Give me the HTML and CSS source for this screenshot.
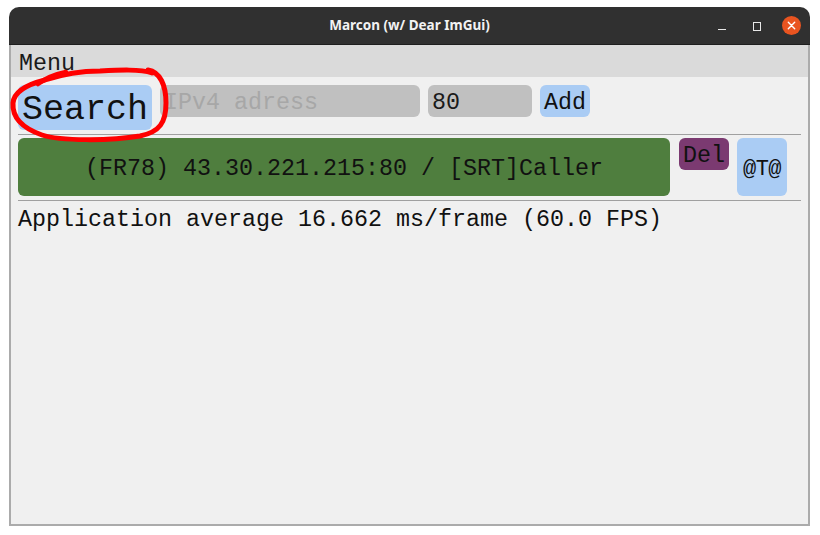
FILE: index.html
```html
<!DOCTYPE html>
<html>
<head>
<meta charset="utf-8">
<title>Marcon (w/ Dear ImGui)</title>
<link rel="stylesheet" href="styles.css">
</head>
<body>
<div class="window">
  <div class="titlebar">
    <span class="spacer"></span>
    <span class="title">Marcon (w/ Dear ImGui)</span>
    <div class="controls">
      <span class="ctl-min"></span>
      <span class="ctl-max"></span>
      <span class="ctl-close">
        <svg width="19" height="19" viewBox="0 0 19 19"><circle cx="9.5" cy="9.5" r="9.5" fill="#e95420"/><path d="M6.3 6.3 L12.7 12.7 M12.7 6.3 L6.3 12.7" stroke="#fff" stroke-width="1.4" stroke-linecap="round"/></svg>
      </span>
    </div>
  </div>
  <div class="frame">
    <div class="menubar">Menu</div>
    <div class="content">
      <div class="row">
        <div class="btn btn-big">Search</div>
        <div class="input input-ip">IPv4 adress</div>
        <div class="input input-port">80</div>
        <div class="btn">Add</div>
      </div>
      <div class="sep"></div>
      <div class="row row-gap-peer">
        <div class="peer">(FR78) 43.30.221.215:80 / [SRT]Caller</div>
        <div class="btn btn-del">Del</div>
        <div class="btn btn-tall">@T@</div>
      </div>
      <div class="sep sep-2"></div>
      <div class="stats">Application average 16.662 ms/frame (60.0 FPS)</div>
    </div>
  </div>
</div>
<svg class="annot" width="820" height="535" viewBox="0 0 820 535">
  <path d="M148 70 C160 72 166 85 166 103 C166 122 160 132 140 136 C110 141 60 141 42 135 C22 128 12 118 13 103 C14 92 25 85 45 80 C60 75 80 71 100 71 C120 70 140 69 152 73" fill="none" stroke="#ff0000" stroke-width="5" stroke-linecap="round" stroke-linejoin="round"/>
  <path d="M38 84 C47 77 56 74 66 72" fill="none" stroke="#ff0000" stroke-width="4.5" stroke-linecap="round"/>
</svg>
</body>
</html>
```

FILE: styles.css
```css
html, body {
  margin: 0;
  padding: 0;
  background: #ffffff;
}
body {
  position: relative;
  width: 820px;
  height: 535px;
  overflow: hidden;
  font-family: "Liberation Mono", "DejaVu Sans Mono", monospace;
  font-size: 23.33px;
  line-height: 26px;
  color: #000;
}
.window {
  width: 801px;
  margin: 7px 0 0 9px;
}
.titlebar {
  height: 38px;
  background: #303030;
  border-radius: 10px 10px 0 0;
  display: grid;
  grid-template-columns: 1fr auto 1fr;
  align-items: center;
  border-bottom: 1px solid #1e1e1e;
  box-sizing: border-box;
}
.title {
  font-family: "Noto Sans", "DejaVu Sans", sans-serif;
  font-weight: 700;
  font-size: 13.5px;
  line-height: 20px;
  color: #f2f2f2;
  margin-top: -1px;
}
.controls {
  justify-self: end;
  display: flex;
  align-items: center;
  padding-right: 9px;
}
.ctl-min {
  width: 8px;
  height: 1px;
  background: #e8e8e8;
  margin-top: 7px;
}
.ctl-max {
  width: 6px;
  height: 7px;
  border: 1px solid #e8e8e8;
  margin-left: 27px;
  margin-top: 1px;
}
.ctl-close {
  width: 19px;
  height: 19px;
  margin-left: 21px;
  display: block;
}
.ctl-close svg { display: block; }

.frame {
  height: 481px;
  box-sizing: border-box;
  border: 2px solid #ababab;
  border-top: 0;
  background: #f0f0f0;
}
.menubar {
  height: 32px;
  box-sizing: border-box;
  background: #dadada;
  padding: 6px 0 0 8px;
  color: #1a1a1a;
}
.content {
  padding: 8px 7px 0 7px;
}
.row {
  display: flex;
  align-items: flex-start;
  gap: 8px;
}
.row-gap-peer .btn-del { margin-left: 1px; }
.btn {
  background: #aaccf4;
  border-radius: 6px;
  padding: 5px 4px 1px 4px;
  height: 26px;
  white-space: pre;
  color: #111;
}
.btn-big {
  font-size: 35px;
  line-height: 39px;
  height: 39px;
  padding: 6px 4px 0 4px;
}
.input {
  background: #c0c0c0;
  border-radius: 6px;
  padding: 5px 4px 1px 4px;
  height: 26px;
  box-sizing: content-box;
  white-space: pre;
  overflow: hidden;
}
.input-ip {
  width: 252px;
  color: #a7a7a7;
}
.input-port {
  width: 96px;
  color: #1a1a1a;
}
.sep {
  height: 1px;
  background: #a0a0a0;
  margin: 4px 0 3px 0;
}
.sep-2 {
  margin: 4px 0 4px 0;
}
.peer {
  width: 652px;
  height: 54px;
  padding-top: 4px;
  background: #4f7e3e;
  border-radius: 6px;
  display: flex;
  align-items: center;
  justify-content: center;
  color: #111;
  white-space: pre;
}
.btn-del {
  background: #7b3a71;
  color: #111;
}
.btn-tall {
  width: 50px;
  height: 52px;
  padding: 6px 0 0 0;
  display: flex;
  align-items: center;
  justify-content: center;
  font-size: 22px;
  letter-spacing: -0.5px;
}
.stats {
  white-space: pre;
  padding-top: 2px;
  color: #111;
}
.annot {
  position: absolute;
  left: 0;
  top: 0;
  pointer-events: none;
}
```
